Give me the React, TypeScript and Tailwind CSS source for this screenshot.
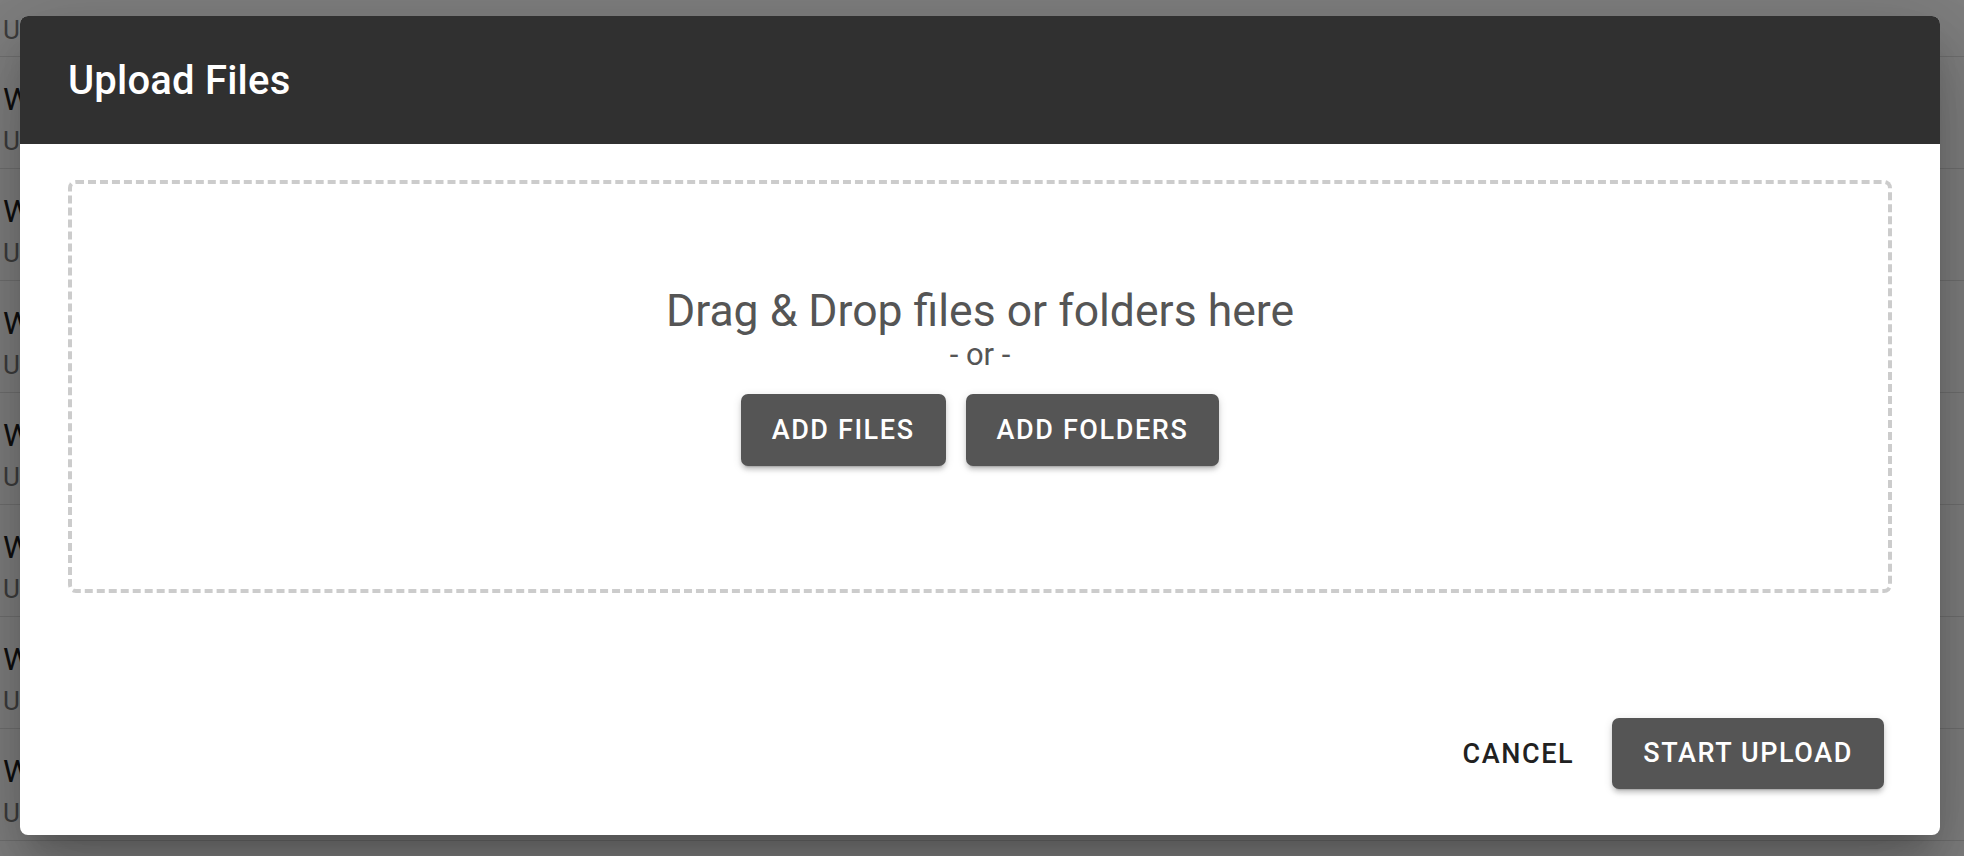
import React from "react";

const rows = Array.from({ length: 7 });

const raised =
  "rounded-[7px] bg-[#555555] text-white text-[27px] font-medium uppercase tracking-[1.6px] shadow-[0_5px_2px_-4px_rgba(0,0,0,0.2),0_4px_4px_0_rgba(0,0,0,0.14),0_2px_10px_0_rgba(0,0,0,0.12)]";

export default function App() {
  return (
    <div
      className="relative w-[1964px] h-[856px] overflow-hidden bg-white"
      style={{ fontFamily: "Roboto, 'Noto Sans', sans-serif" }}
    >
      {/* background list */}
      <div className="flex flex-col">
        <div className="h-[57px] border-b border-[#e0e0e0] pt-[12px] pl-[3px] box-border">
          <div className="text-[26px] leading-[36px] text-[#7a7a7a]">Updated recently</div>
        </div>
        {rows.map((_, i) => (
          <div
            key={i}
            className="h-[112px] border-b border-[#e0e0e0] flex flex-col pt-[18px] pl-[3px] box-border"
          >
            <div className="text-[32px] leading-[48px] text-[#1f1f1f]">Workspace {i + 1}</div>
            <div className="text-[26px] leading-[36px] text-[#7a7a7a]">Updated recently</div>
          </div>
        ))}
      </div>

      {/* backdrop */}
      <div className="absolute inset-0 bg-black/50" />

      {/* dialog */}
      <div className="absolute left-[20px] top-[16px] w-[1920px] h-[819px] bg-white rounded-[8px] overflow-hidden flex flex-col shadow-[0_21px_28px_-13px_rgba(0,0,0,0.2),0_45px_72px_6px_rgba(0,0,0,0.14),0_17px_87px_15px_rgba(0,0,0,0.12)]">
        <div className="h-[128px] bg-[#303030] flex items-center px-[48px] shrink-0">
          <h2 className="text-[40px] font-medium text-white leading-none tracking-[0.2px] pt-[2px]">Upload Files</h2>
        </div>

        <div className="pt-[36px] px-[48px]">
          <div className="h-[413px] box-border border-4 border-dashed border-[#cccccc] rounded-[8px] flex flex-col items-center pt-[101px]">
            <div className="text-[44.5px] leading-[52px] text-[#555555]">Drag &amp; Drop files or folders here</div>
            <div className="mt-0 text-[31px] leading-[36px] text-[#555555]">- or -</div>
            <div className="mt-[21px] flex gap-[20px]">
              <button className={`h-[72px] px-[31px] ${raised}`}>Add Files</button>
              <button className={`h-[72px] px-[31px] ${raised}`}>Add Folders</button>
            </div>
          </div>
        </div>

        <div className="mt-auto flex justify-end items-center gap-[23px] pr-[56px] pb-[46px]">
          <button className="h-[72px] px-[15px] pt-[2px] text-[27px] font-medium uppercase tracking-[1.6px] text-[#212121]">
            Cancel
          </button>
          <button className={`h-[71px] px-[31px] ${raised}`}>Start Upload</button>
        </div>
      </div>
    </div>
  );
}
